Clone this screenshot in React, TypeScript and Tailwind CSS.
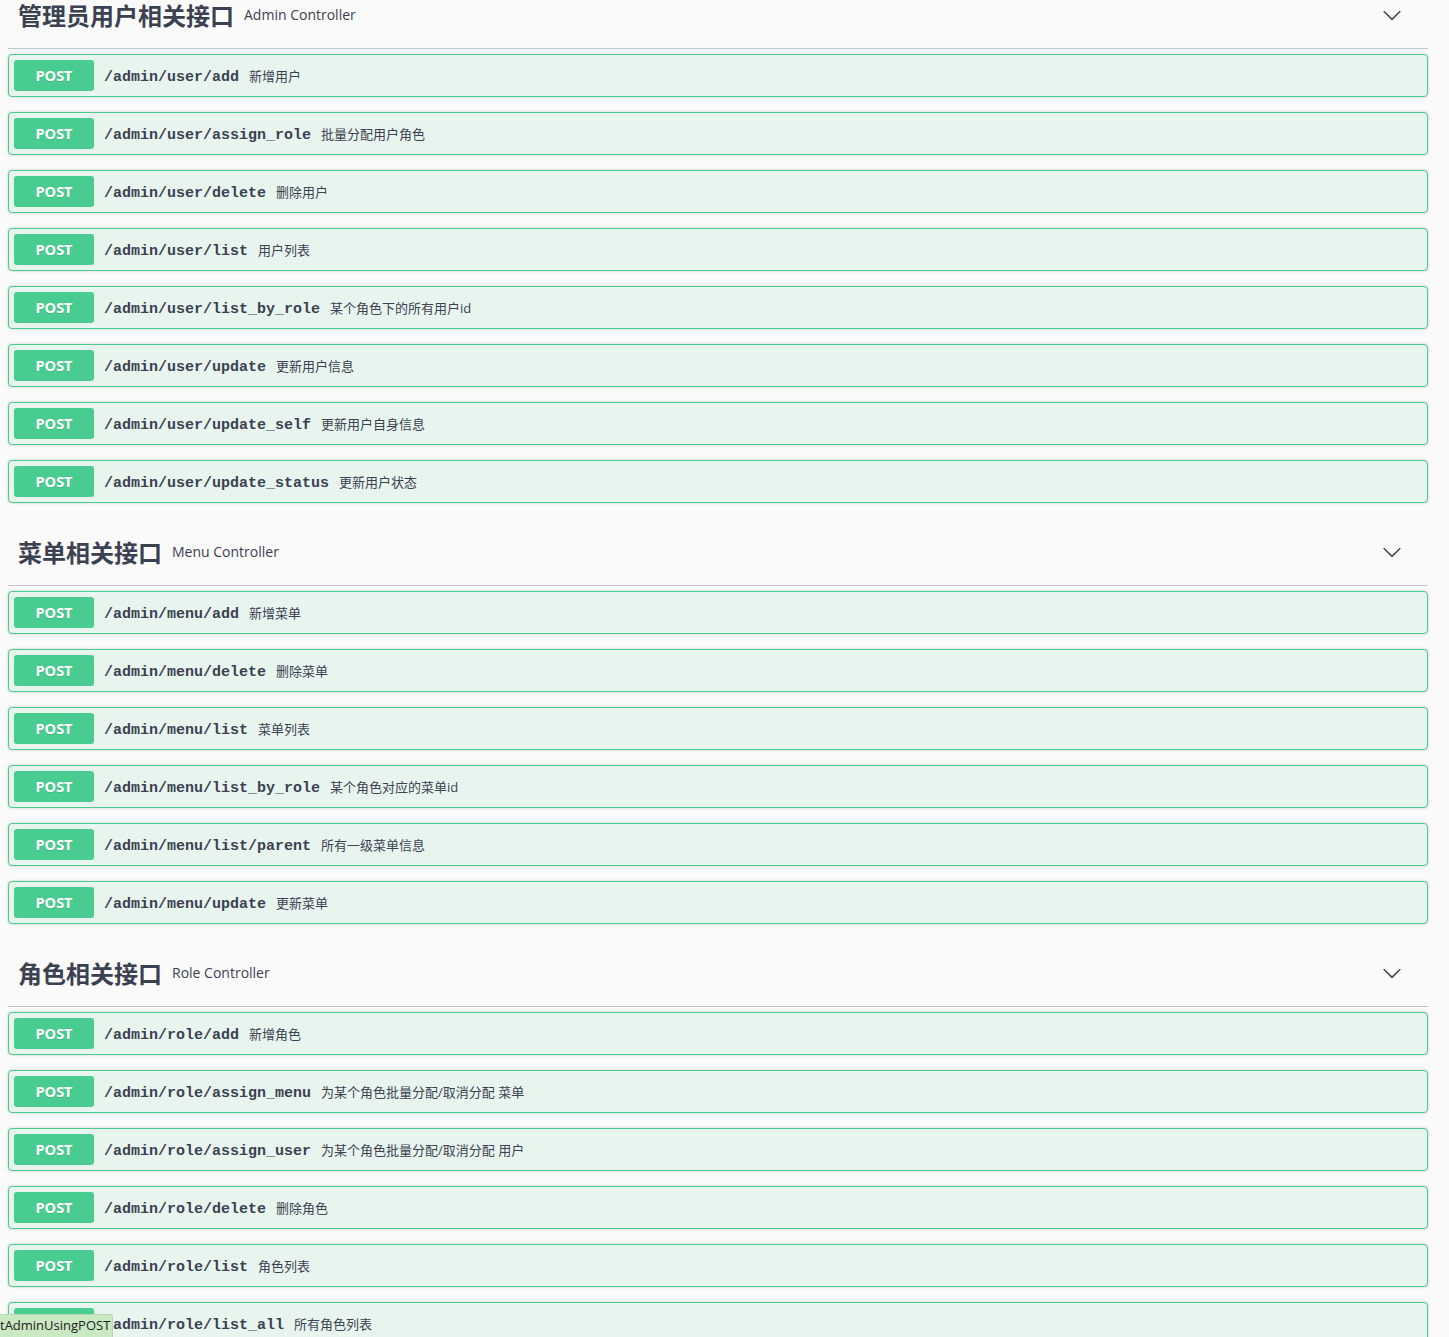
import React from "react";

type Op = { path: string; summary: string };
type Section = { title: string; sub: string; ops: Op[] };

const sections: Section[] = [
  {
    title: "管理员用户相关接口",
    sub: "Admin Controller",
    ops: [
      { path: "/admin/user/add", summary: "新增用户" },
      { path: "/admin/user/assign_role", summary: "批量分配用户角色" },
      { path: "/admin/user/delete", summary: "删除用户" },
      { path: "/admin/user/list", summary: "用户列表" },
      { path: "/admin/user/list_by_role", summary: "某个角色下的所有用户id" },
      { path: "/admin/user/update", summary: "更新用户信息" },
      { path: "/admin/user/update_self", summary: "更新用户自身信息" },
      { path: "/admin/user/update_status", summary: "更新用户状态" },
    ],
  },
  {
    title: "菜单相关接口",
    sub: "Menu Controller",
    ops: [
      { path: "/admin/menu/add", summary: "新增菜单" },
      { path: "/admin/menu/delete", summary: "删除菜单" },
      { path: "/admin/menu/list", summary: "菜单列表" },
      { path: "/admin/menu/list_by_role", summary: "某个角色对应的菜单id" },
      { path: "/admin/menu/list/parent", summary: "所有一级菜单信息" },
      { path: "/admin/menu/update", summary: "更新菜单" },
    ],
  },
  {
    title: "角色相关接口",
    sub: "Role Controller",
    ops: [
      { path: "/admin/role/add", summary: "新增角色" },
      { path: "/admin/role/assign_menu", summary: "为某个角色批量分配/取消分配 菜单" },
      { path: "/admin/role/assign_user", summary: "为某个角色批量分配/取消分配 用户" },
      { path: "/admin/role/delete", summary: "删除角色" },
      { path: "/admin/role/list", summary: "角色列表" },
      { path: "/admin/role/list_all", summary: "所有角色列表" },
    ],
  },
];

const Chevron = () => (
  <svg width="20" height="20" viewBox="0 0 20 20" className="fill-[#3b4151]">
    <path d="M17.418 6.109c.272-.268.709-.268.979 0s.271.701 0 .969l-7.908 7.83c-.27.268-.707.268-.979 0l-7.908-7.83c-.27-.268-.27-.701 0-.969.271-.268.709-.268.979 0L10 13.25l7.418-7.141z" />
  </svg>
);

function OpRow({ op }: { op: Op }) {
  return (
    <div className="mb-[15px] rounded-[4px] border border-[#49cc90] bg-[#e8f5ef] shadow-[0_0_3px_rgba(0,0,0,0.19)]">
      <div className="flex items-center p-[5px]">
        <span className="flex h-[31px] w-[80px] items-center justify-center rounded-[3px] bg-[#49cc90] font-['Open_Sans',sans-serif] text-[14.5px] font-bold text-white [text-shadow:0_1px_0_rgba(0,0,0,0.1)]">
          POST
        </span>
        <span className="translate-y-[3px] px-[10px] font-['Liberation_Mono',monospace] text-[15px] font-bold text-[#3b4151]">
          {op.path}
        </span>
        <span className="translate-y-[1px] font-['Open_Sans','Noto_Sans_CJK_SC',sans-serif] text-[13px] text-[#3b4151]">
          {op.summary}
        </span>
      </div>
    </div>
  );
}

export default function App() {
  return (
    <div className="relative h-[1337px] overflow-hidden bg-[#fafafa]">
      <div className="-mt-[19px] ml-[8px] w-[1420px]">
        {sections.map((s) => (
          <div key={s.title}>
            <div className="mb-[5px] flex h-[68px] items-center border-b border-[#c4c6cb] pl-[10px] pr-[26px]">
              <span className="font-['Noto_Sans_CJK_SC',sans-serif] text-[24px] font-bold leading-none text-[#3b4151]">
                {s.title}
              </span>
              <span className="pl-[10px] font-['Open_Sans',sans-serif] text-[14px] text-[#3b4151]">
                {s.sub}
              </span>
              <span className="ml-auto flex">
                <Chevron />
              </span>
            </div>
            {s.ops.map((op) => (
              <OpRow key={op.path} op={op} />
            ))}
          </div>
        ))}
      </div>
      <div className="absolute bottom-0 left-0 flex h-[23px] w-[113px] items-center overflow-hidden rounded-tr-[3px] border-r border-t border-[#b8d8b0] bg-[#cbe8c4] font-['Open_Sans',sans-serif] text-[13px] text-[#222]">
        <span className="whitespace-nowrap">tAdminUsingPOST</span>
      </div>
    </div>
  );
}
